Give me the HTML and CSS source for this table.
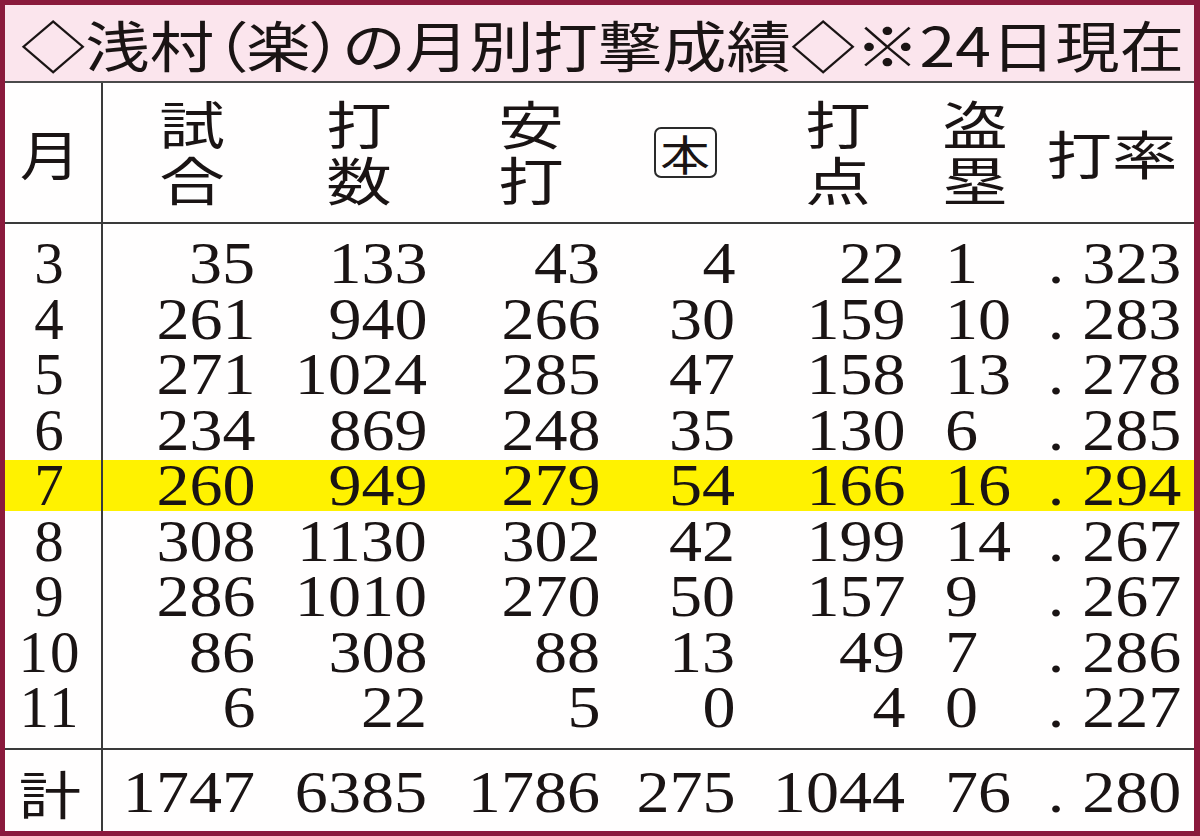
FILE: index.html
```html
<!DOCTYPE html>
<html lang="ja">
<head>
<meta charset="utf-8">
<title>浅村（楽）の月別打撃成績</title>
<link rel="stylesheet" href="styles.css">
</head>
<body>
<div class="frame">
  <div class="title"><span class="title-text">◇浅村（楽）の月別打撃成績◇※24日現在</span></div>
  <div class="row head">
    <div class="cell month"><span class="jp wide">月</span></div>
    <div class="cell hd"><span class="jp stack"><span class="ln">試</span><span class="ln">合</span></span></div>
    <div class="cell hd"><span class="jp stack"><span class="ln">打</span><span class="ln">数</span></span></div>
    <div class="cell hd"><span class="jp stack"><span class="ln">安</span><span class="ln">打</span></span></div>
    <div class="cell hd"><span class="jp boxed"><span class="wide">本</span></span></div>
    <div class="cell hd"><span class="jp stack"><span class="ln">打</span><span class="ln">点</span></span></div>
    <div class="cell hd hd-sb"><span class="jp stack"><span class="ln">盗</span><span class="ln">塁</span></span></div>
    <div class="cell hd hd-avg"><span class="jp wide">打率</span></div>
  </div>
  <div class="body">
    <div class="row data"><div class="cell month">3</div><div class="cell n"><span class="num">35</span></div><div class="cell n"><span class="num">133</span></div><div class="cell n"><span class="num">43</span></div><div class="cell n"><span class="num">4</span></div><div class="cell n"><span class="num">22</span></div><div class="cell sb"><span class="num">1</span></div><div class="cell avg"><span class="num"><span class="dot">.</span>323</span></div></div>
    <div class="row data"><div class="cell month">4</div><div class="cell n"><span class="num">261</span></div><div class="cell n"><span class="num">940</span></div><div class="cell n"><span class="num">266</span></div><div class="cell n"><span class="num">30</span></div><div class="cell n"><span class="num">159</span></div><div class="cell sb"><span class="num">10</span></div><div class="cell avg"><span class="num"><span class="dot">.</span>283</span></div></div>
    <div class="row data"><div class="cell month">5</div><div class="cell n"><span class="num">271</span></div><div class="cell n"><span class="num">1024</span></div><div class="cell n"><span class="num">285</span></div><div class="cell n"><span class="num">47</span></div><div class="cell n"><span class="num">158</span></div><div class="cell sb"><span class="num">13</span></div><div class="cell avg"><span class="num"><span class="dot">.</span>278</span></div></div>
    <div class="row data"><div class="cell month">6</div><div class="cell n"><span class="num">234</span></div><div class="cell n"><span class="num">869</span></div><div class="cell n"><span class="num">248</span></div><div class="cell n"><span class="num">35</span></div><div class="cell n"><span class="num">130</span></div><div class="cell sb"><span class="num">6</span></div><div class="cell avg"><span class="num"><span class="dot">.</span>285</span></div></div>
    <div class="row data hl"><div class="cell month">7</div><div class="cell n"><span class="num">260</span></div><div class="cell n"><span class="num">949</span></div><div class="cell n"><span class="num">279</span></div><div class="cell n"><span class="num">54</span></div><div class="cell n"><span class="num">166</span></div><div class="cell sb"><span class="num">16</span></div><div class="cell avg"><span class="num"><span class="dot">.</span>294</span></div></div>
    <div class="row data"><div class="cell month">8</div><div class="cell n"><span class="num">308</span></div><div class="cell n"><span class="num">1130</span></div><div class="cell n"><span class="num">302</span></div><div class="cell n"><span class="num">42</span></div><div class="cell n"><span class="num">199</span></div><div class="cell sb"><span class="num">14</span></div><div class="cell avg"><span class="num"><span class="dot">.</span>267</span></div></div>
    <div class="row data"><div class="cell month">9</div><div class="cell n"><span class="num">286</span></div><div class="cell n"><span class="num">1010</span></div><div class="cell n"><span class="num">270</span></div><div class="cell n"><span class="num">50</span></div><div class="cell n"><span class="num">157</span></div><div class="cell sb"><span class="num">9</span></div><div class="cell avg"><span class="num"><span class="dot">.</span>267</span></div></div>
    <div class="row data"><div class="cell month">10</div><div class="cell n"><span class="num">86</span></div><div class="cell n"><span class="num">308</span></div><div class="cell n"><span class="num">88</span></div><div class="cell n"><span class="num">13</span></div><div class="cell n"><span class="num">49</span></div><div class="cell sb"><span class="num">7</span></div><div class="cell avg"><span class="num"><span class="dot">.</span>286</span></div></div>
    <div class="row data"><div class="cell month">11</div><div class="cell n"><span class="num">6</span></div><div class="cell n"><span class="num">22</span></div><div class="cell n"><span class="num">5</span></div><div class="cell n"><span class="num">0</span></div><div class="cell n"><span class="num">4</span></div><div class="cell sb"><span class="num">0</span></div><div class="cell avg"><span class="num"><span class="dot">.</span>227</span></div></div>
  </div>
  <div class="row total"><div class="cell month"><span class="jp wide">計</span></div><div class="cell n"><span class="num">1747</span></div><div class="cell n"><span class="num">6385</span></div><div class="cell n"><span class="num">1786</span></div><div class="cell n"><span class="num">275</span></div><div class="cell n"><span class="num">1044</span></div><div class="cell sb"><span class="num">76</span></div><div class="cell avg"><span class="num"><span class="dot">.</span>280</span></div></div>
</div>
</body>
</html>
```

FILE: styles.css
```css
html, body {
  margin: 0;
  padding: 0;
  background: #ffffff;
}

.frame {
  width: 1200px;
  height: 836px;
  box-sizing: border-box;
  border: 5px solid #8a1a3c;
  border-right-width: 6px;
  display: flex;
  flex-direction: column;
  background: #fffefe;
  color: #1a1414;
  font-family: "Liberation Serif", "Times New Roman", serif;
}

.jp {
  font-family: "Noto Sans CJK JP", "Noto Sans", sans-serif;
  font-weight: 400;
}

.wide {
  display: inline-block;
  transform: scaleX(1.2);
}

.title {
  height: 76px;
  flex: none;
  background: #fbe5ed;
  border-bottom: 2px solid #4a4a4a;
  display: flex;
  align-items: center;
  padding-left: 16px;
}

.title-text {
  display: inline-block;
  font-family: "Noto Sans CJK JP", "Noto Sans", sans-serif;
  font-size: 55px;
  line-height: 1.2;
  font-feature-settings: "palt";
  white-space: nowrap;
  color: #1a1414;
  transform: scaleX(1.17);
  transform-origin: left center;
}

.row {
  display: grid;
  grid-template-columns: 98px 162px 172px 173px 135px 170px 115px 164px;
}

.cell {
  display: flex;
  align-items: center;
}

.month {
  justify-content: center;
  border-right: 2px solid #3a3a3a;
  padding-right: 6px;
}

.head {
  height: 139px;
  flex: none;
  border-bottom: 2px solid #3a3a3a;
}

.head .month .jp {
  font-size: 54px;
  line-height: 1.1;
  transform: scaleX(1.12);
}

.hd {
  justify-content: center;
  padding-left: 16px;
}

.hd-sb {
  padding-left: 6px;
}

.hd-avg {
  padding-left: 0;
}

.stack {
  display: flex;
  flex-direction: column;
  font-size: 52px;
  padding-bottom: 4px;
  transform: scaleX(1.26);
}

.ln {
  display: block;
  line-height: 56px;
}

.hd-avg .wide {
  font-size: 52px;
  line-height: 1.1;
  transform: scaleX(1.26);
}

.boxed {
  width: 63px;
  height: 51px;
  box-sizing: border-box;
  border: 2px solid #2a2a2a;
  border-radius: 7px;
  display: flex;
  align-items: center;
  justify-content: center;
  font-size: 42px;
  line-height: 1;
}

.boxed .wide {
  transform: scaleX(1.18);
}

.body {
  height: 526px;
  flex: none;
  box-sizing: border-box;
  border-bottom: 2px solid #3a3a3a;
}

.data {
  height: 55.5px;
  font-size: 59px;
  line-height: 1;
}

.data:first-child {
  height: 65.5px;
}

.data:first-child .cell {
  padding-top: 10px;
}

.data:last-child {
  height: 72px;
}

.data:last-child .cell {
  padding-bottom: 16.5px;
}

.hl {
  background: linear-gradient(to bottom, transparent 0, transparent 4px, #fff200 4px, #fff200 55px, transparent 55px);
}

.data .month,
.total .month {
  letter-spacing: 2px;
}

.num {
  display: inline-block;
  white-space: nowrap;
  transform: scaleX(1.12);
}

.n {
  justify-content: flex-end;
  padding-right: 10px;
}

.n .num,
.avg .num {
  transform-origin: right center;
}

.sb {
  justify-content: flex-start;
  padding-left: 30px;
}

.sb .num {
  transform-origin: left center;
}

.avg {
  justify-content: flex-end;
  padding-right: 13px;
}

.dot {
  margin-right: 16px;
}

.total {
  flex: 1;
  font-size: 59px;
  line-height: 1;
}

.total .cell {
  padding-top: 4px;
}

.total .month .jp {
  font-size: 52px;
  letter-spacing: 0;
}
```
